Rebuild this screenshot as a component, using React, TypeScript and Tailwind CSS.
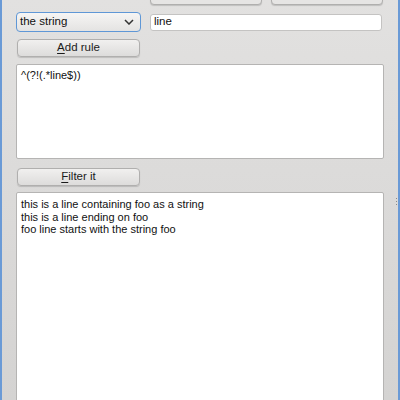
const font = "font-['Liberation_Sans','DejaVu_Sans',sans-serif]";

function PushButton({ label, mnemonic }: { label: string; mnemonic: string }) {
    const rest = label.slice(1);
    return (
        <button
            className={`h-[18px] w-[123px] ml-px rounded-[4px] border border-[#b0afae] bg-gradient-to-b from-[#f1f0ef] to-[#dddcdb] shadow-[0_1px_1px_rgba(0,0,0,0.15)] text-[11.5px] leading-none text-[#1b1b1b] flex items-center justify-center ${font}`}
        >
            <span className="underline underline-offset-2">{mnemonic}</span>
            {rest}
        </button>
    );
}

export default function App() {
    return (
        <div className={`w-[400px] h-[400px] overflow-hidden border-x-2 border-[#6a9ad6] bg-gradient-to-b from-[#e2e1e0] to-[#d4d3d2] pl-[14px] pr-[14px] flex flex-col ${font}`}>
            {/* buttons cut off at the top */}
            <div className="flex h-[5px] shrink-0 items-end">
                <div className="ml-[134px] h-[20px] w-[112px] rounded-[4px] border border-[#b0afae] bg-[#e6e5e4] shadow-[0_1px_1px_rgba(0,0,0,0.15)]" />
                <div className="ml-[9px] h-[20px] w-[112px] rounded-[4px] border border-[#b0afae] bg-[#e6e5e4] shadow-[0_1px_1px_rgba(0,0,0,0.15)]" />
            </div>

            <div className="flex shrink-0 items-center mt-[7px] h-[20px]">
                <div className="h-[20px] w-[125px] rounded-[4px] border border-[#5f97d6] bg-gradient-to-b from-[#f6f5f4] to-[#e4e3e2] flex items-center pl-[3px] pr-[6px] text-[11.5px] text-[#111]">
                    <span className="flex-1">the string</span>
                    <svg width="10" height="6" viewBox="0 0 10 6">
                        <path d="M1 1 L5 5 L9 1" fill="none" stroke="#333" strokeWidth="1.5" />
                    </svg>
                </div>
                <div className="ml-[9px] h-[17px] w-[232px] rounded-[3px] border border-[#c4c3c2] bg-white flex items-center pl-[3px] text-[11.5px] text-[#111]">
                    line
                </div>
            </div>

            <div className="mt-[7px] flex shrink-0">
                <PushButton label="Add rule" mnemonic="A" />
            </div>

            <div className="mt-[7px] h-[95px] w-[368px] shrink-0 rounded-[2px] border border-[#b5b4b3] bg-white px-[4px] pt-[4px] text-[11px] leading-[12px] text-[#111]">
                ^(?!(.*line$))
            </div>

            <div className="mt-[9px] flex shrink-0">
                <PushButton label="Filter it" mnemonic="F" />
            </div>

            <div className="mt-[6px] flex shrink-0">
                <div className="w-[368px] h-[220px] shrink-0 rounded-t-[2px] border border-[#b5b4b3] bg-white px-[4px] pt-[5px] text-[11px] leading-[12.5px] text-[#111]">
                    <div>this is a line containing foo as a string</div>
                    <div>this is a line ending on foo</div>
                    <div>foo line starts with the string foo</div>
                </div>
                <div className="ml-[12px] mt-[6px] flex flex-col gap-[2px]">
                    <div className="w-px h-px bg-[#8a8a8a]" />
                    <div className="w-px h-px bg-[#8a8a8a]" />
                    <div className="w-px h-px bg-[#8a8a8a]" />
                </div>
            </div>
        </div>
    );
}
